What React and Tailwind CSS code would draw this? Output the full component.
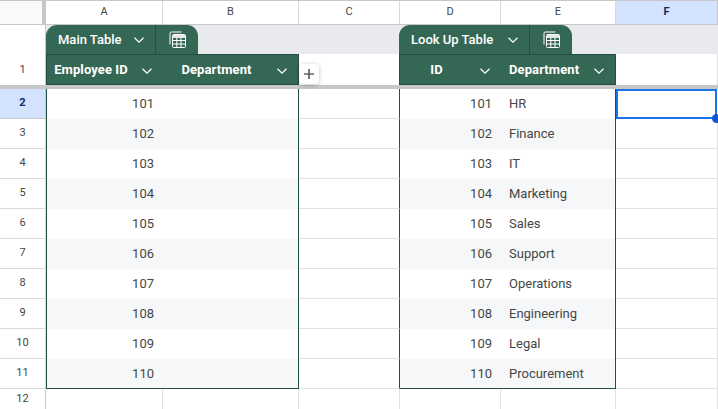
const rows = [
  [2, 101, "HR"], [3, 102, "Finance"], [4, 103, "IT"], [5, 104, "Marketing"], [6, 105, "Sales"],
  [7, 106, "Support"], [8, 107, "Operations"], [9, 108, "Engineering"], [10, 109, "Legal"], [11, 110, "Procurement"],
];
const gridCols = "grid grid-cols-[46px_117px_136px_101px_101px_115px_102px]";

function Chevron({ className = "" }) {
  return (
    <svg width="12" height="8" viewBox="0 0 12 8" fill="none" className={className}>
      <path d="M1.5 1.8 6 6.2l4.5-4.4" stroke="#fff" strokeWidth="1.2" />
    </svg>
  );
}

function TableIcon() {
  return (
    <svg width="17" height="17" viewBox="0 0 17 17" fill="none">
      <path d="M1 13.5V2.2C1 1.5 1.5 1 2.2 1H12.5" stroke="#fff" strokeWidth="1" />
      <rect x="3.5" y="3.5" width="13" height="13" rx="1" stroke="#fff" strokeWidth="1" />
      <rect x="4" y="4" width="12" height="3" fill="#fff" opacity="0.85" />
      <path d="M4 9.5h12M4 13h12M7.8 7v9M12 7v9" stroke="#fff" strokeWidth="1" />
    </svg>
  );
}

function Tab({ label, labelWidth, width }) {
  return (
    <div className={`flex h-[29px] ${width} self-end rounded-t-[11px] bg-[#356854] text-white`}>
      <div className={`flex ${labelWidth} items-center border-r border-[#234f3e] pl-3`}>
        <span className="flex-1 text-[13px] font-medium">{label}</span>
        <Chevron className="mr-[10px]" />
      </div>
      <div className="flex flex-1 items-center justify-center">
        <TableIcon />
      </div>
    </div>
  );
}

function HeaderCell({ label, border = "", align = "text-center" }) {
  return (
    <div className={`flex h-[31px] items-center bg-[#356854] border-t border-b border-[#234f3e] pt-[1px] ${border}`}>
      <span className={`flex-1 pr-[2px] text-[13px] font-bold tracking-[0.1px] text-white ${align}`}>{label}</span>
      <Chevron className="ml-1 mr-[10px] mt-[1px]" />
    </div>
  );
}

export default function App() {
  return (
    <div className="h-[409px] w-[718px] overflow-hidden bg-white font-['Roboto',sans-serif] text-[#444746]">
      {/* Column letters */}
      <div className={`${gridCols} h-[25px] border-t border-b border-[#c7c7c7] text-[11px] text-[#444746]`}>
        <div className="border-r-[4px] border-[#c7c7c7] bg-[#f8f9fa]" />
        {["A", "B", "C", "D", "E"].map((c) => (
          <div key={c} className="flex items-center justify-center border-r border-[#d9d9d9]">{c}</div>
        ))}
        <div className="flex items-center justify-center border-r border-[#c7c7c7] bg-[#d3e3fd] font-bold text-[#0b2a5b]">F</div>
      </div>

      {/* Table name tabs */}
      <div className={`${gridCols} h-[29px]`}>
        <div className="border-r border-[#c7c7c7] bg-white" />
        <div className="col-span-6 flex gap-[201px] bg-[#e8eaed]">
          <Tab label="Main Table" labelWidth="w-[110px]" width="w-[152px]" />
          <Tab label="Look Up Table" labelWidth="w-[131px]" width="w-[173px]" />
        </div>
      </div>

      {/* Row 1 */}
      <div className={`${gridCols} relative h-[31px]`}>
        <div className="flex items-center justify-center border-r border-[#c7c7c7] pt-[1px] text-[11px]">1</div>
        <HeaderCell label="Employee ID" border="border-l" />
        <HeaderCell label="Department" border="border-r" />
        <div className="border-r border-[#234f3e]" />
        <HeaderCell label="ID" />
        <HeaderCell label="Department" border="border-r pl-2" align="text-left" />
        <div className="border-r border-[#e1e1e1]" />
        <button className="absolute left-[299px] top-[10px] flex h-[20px] w-[20px] items-center justify-center rounded-[4px] bg-white shadow-[0_1px_4px_rgba(0,0,0,0.25)]">
          <svg width="12" height="12" viewBox="0 0 12 12"><path d="M6 1v10M1 6h10" stroke="#5f6368" strokeWidth="1.7" /></svg>
        </button>
      </div>

      {/* Frozen divider */}
      <div className="h-[4px] bg-[#c7c7c7]" />

      {/* Data rows */}
      {rows.map(([n, id, dept], i) => {
        const alt = i % 2 === 1 ? "bg-[#f5f7f8]" : "bg-white";
        const last = n === 11;
        const bottom = last ? "border-b border-b-[#234f3e]" : "";
        return (
          <div key={n} className={`${gridCols} h-[30px] text-[13px]`}>
            <div className={`flex items-center justify-center border-r border-b text-[11px] ${n === 2 ? "bg-[#d3e3fd] font-bold text-[#0b2a5b] border-[#c7c7c7]" : "border-[#d9d9d9]"}`}>{n}</div>
            <div className={`flex items-center justify-end border-l border-l-[#234f3e] pr-[9px] ${alt} ${bottom}`}>{id}</div>
            <div className={`border-r border-r-[#234f3e] ${alt} ${bottom}`} />
            <div className="border-r border-b border-r-[#234f3e] border-b-[#e1e1e1]" />
            <div className={`flex items-center justify-end pr-[9px] ${alt} ${bottom}`}>{id}</div>
            <div className={`flex items-center border-r border-r-[#234f3e] pl-2 ${alt} ${bottom}`}>{dept}</div>
            {n === 2 ? (
              <div className="relative mr-[1px] border-2 border-[#1a73e8]">
                <span className="absolute -bottom-[6px] -right-[6px] h-[9px] w-[9px] rounded-full bg-[#0b57d0]" />
              </div>
            ) : (
              <div className="border-r border-b border-[#e1e1e1]" />
            )}
          </div>
        );
      })}

      {/* Row 12 */}
      <div className={`${gridCols} h-[21px] text-[11px]`}>
        <div className="flex items-center justify-center border-r border-[#c7c7c7]">12</div>
        {[0, 1, 2, 3, 4, 5].map((k) => (
          <div key={k} className="border-r border-[#e1e1e1]" />
        ))}
      </div>
    </div>
  );
}
